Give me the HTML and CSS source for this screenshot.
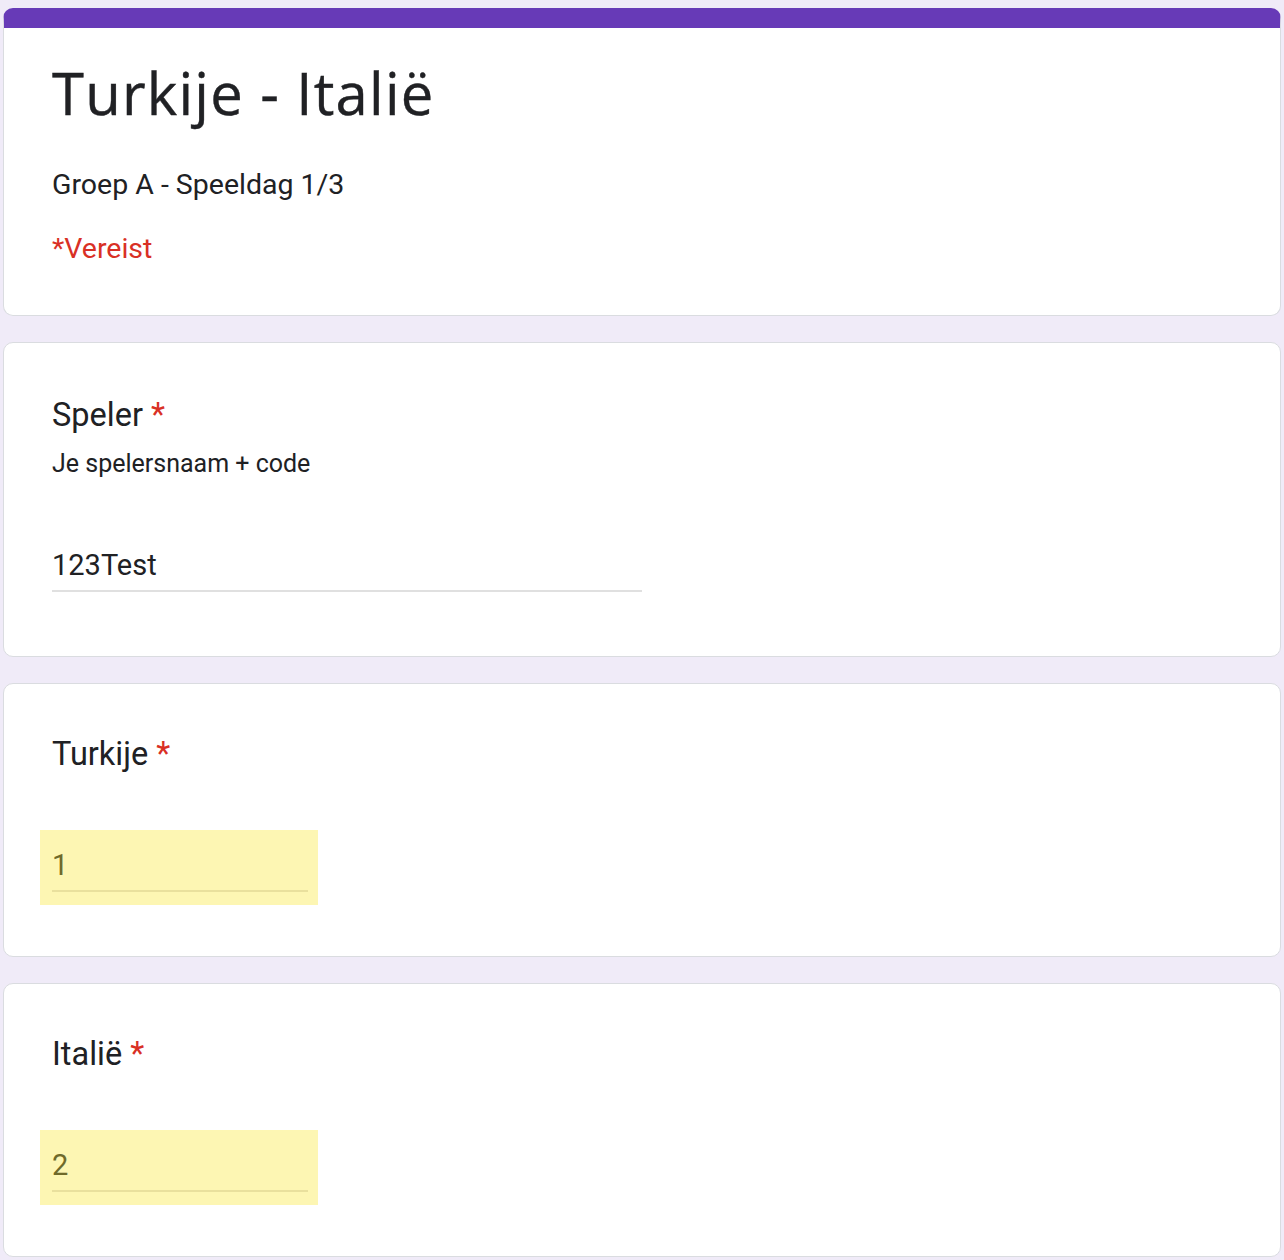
FILE: index.html
```html
<!DOCTYPE html>
<html lang="nl">
<head>
<meta charset="utf-8">
<title>Turkije - Italië</title>
<link rel="stylesheet" href="styles.css">
</head>
<body>
<main class="form">
  <section class="card card-header">
    <h1 class="title">Turkije - Italië</h1>
    <p class="subtitle">Groep A - Speeldag 1/3</p>
    <p class="required-note">*Vereist</p>
  </section>

  <section class="card card-text">
    <div class="label">Speler <span class="star">*</span></div>
    <div class="help">Je spelersnaam + code</div>
    <div class="field field-wide">
      <div class="field-value">123Test</div>
    </div>
  </section>

  <section class="card">
    <div class="label">Turkije <span class="star">*</span></div>
    <div class="autofill">
      <div class="field field-short">
        <div class="field-value">1</div>
      </div>
    </div>
  </section>

  <section class="card">
    <div class="label">Italië <span class="star">*</span></div>
    <div class="autofill">
      <div class="field field-short">
        <div class="field-value">2</div>
      </div>
    </div>
  </section>
</main>
</body>
</html>
```

FILE: styles.css
```css
* { box-sizing: border-box; }

html, body {
  margin: 0;
  padding: 0;
  background: #f0ebf8;
}

body {
  font-family: Roboto, "Liberation Sans", Arial, sans-serif;
  color: #202124;
}

.form {
  display: flex;
  flex-direction: column;
  gap: 26px;
  padding: 8px 3px 0 3px;
}

.card {
  background: #fff;
  border: 1px solid #dadce0;
  border-radius: 10px;
  padding: 50px 48px 51px 48px;
}

.card-header {
  border-top: 20px solid #673ab7;
  padding: 33px 48px 50px 48px;
}

.card-text {
  padding-top: 52px;
  padding-bottom: 64px;
}

.title {
  margin: 0;
  font-family: "Open Sans", Roboto, sans-serif;
  font-weight: 400;
  font-size: 58px;
  line-height: 64px;
  letter-spacing: 1.2px;
  -webkit-text-stroke: 0.4px #202124;
}

.subtitle {
  margin: 44px 0 0 0;
  font-size: 28.5px;
  line-height: 32px;
}

.required-note {
  margin: 32px 0 0 0;
  color: #d93025;
  font-size: 28.5px;
  line-height: 32px;
}

.label {
  font-size: 32.5px;
  line-height: 40px;
}

.star {
  color: #d93025;
}

.help {
  margin-top: 13px;
  font-size: 25px;
  line-height: 32px;
}

.field {
  border-bottom: 2px solid #e0e0e0;
  padding-bottom: 7px;
}

.field-value {
  font-size: 29px;
  line-height: 36px;
}

.field-wide {
  margin-top: 67px;
  width: 590px;
}

.autofill {
  margin: 56px 0 0 -12px;
  width: 278px;
  background: #fdf6b3;
  padding: 17px 10px 13px 12px;
}

.field-short {
  border-bottom-color: #e9e09d;
}

.field-short .field-value {
  color: #6f6a2a;
}
```
